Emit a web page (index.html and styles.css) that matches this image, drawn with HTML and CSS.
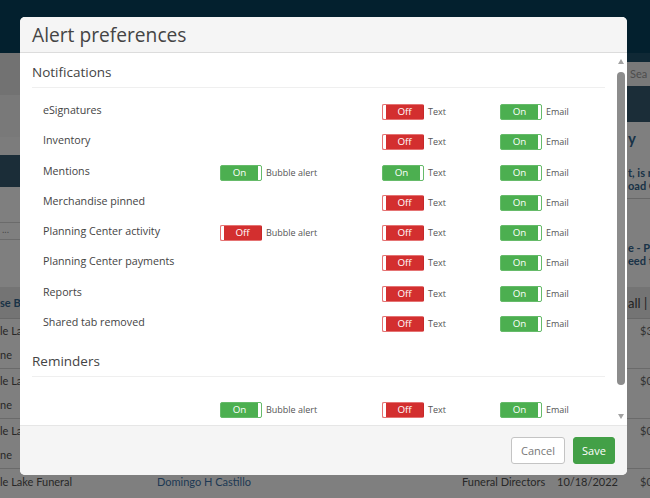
FILE: index.html
```html
<!DOCTYPE html>
<html lang="en">
<head>
<meta charset="utf-8">
<title>Alert preferences</title>
<link rel="stylesheet" href="styles.css">
</head>
<body>
<div class="page">
  <div class="topbar"></div>
  <div class="upper">
    <div class="main-top">
      <div class="bar1"></div>
      <div class="bar2"></div>
      <div class="bar3"></div>
      <div class="bar4"></div>
      <div class="filter"></div>
      <div class="filter2">...</div>
    </div>
    <div class="side">
      <div class="s-nav"></div>
      <div class="s-search">Sea</div>
      <div class="s-nav2"></div>
      <div class="s-notice">
        <div class="s-title">y</div>
        <div class="s-text s-first">t, is re</div>
        <div class="s-text">oad C</div>
        <div class="s-sep"></div>
        <div class="s-text s-second">e - Pr</div>
        <div class="s-text">eed t</div>
      </div>
    </div>
  </div>
  <div class="thead"><span class="th-name">se Br</span><span class="th-all">all |</span></div>
  <div class="trow">
    <div class="td"><div>le La</div><div>ne</div></div>
    <div class="td"></div>
    <div class="td"></div>
    <div class="td"></div>
    <div class="td amt">$3</div>
  </div>
  <div class="trow">
    <div class="td"><div>le La</div><div>ne</div></div>
    <div class="td"></div>
    <div class="td"></div>
    <div class="td"></div>
    <div class="td amt">$0</div>
  </div>
  <div class="trow">
    <div class="td"><div>le La</div><div>ne</div></div>
    <div class="td"></div>
    <div class="td"></div>
    <div class="td"></div>
    <div class="td amt">$0</div>
  </div>
  <div class="trow last-row">
    <div class="td"><div>le Lake Funeral</div></div>
    <div class="td link">Domingo H Castillo</div>
    <div class="td">Funeral Directors</div>
    <div class="td">10/18/2022</div>
    <div class="td amt">$0</div>
  </div>
</div>

<div class="overlay"></div>

<div class="modal">
  <div class="modal-header"><h1 class="modal-title">Alert preferences</h1></div>
  <div class="modal-body">
    <div class="body-content">
      <h2 class="section-title">Notifications</h2>
      <div class="rows">
        <div class="row">
          <div class="label">eSignatures</div>
          <div class="cell"></div>
          <div class="cell"><span class="toggle off"><span class="knob"></span><span class="tl">Off</span></span><span class="opt">Text</span></div>
          <div class="cell"><span class="toggle on"><span class="tl">On</span><span class="knob"></span></span><span class="opt">Email</span></div>
        </div>
        <div class="row">
          <div class="label">Inventory</div>
          <div class="cell"></div>
          <div class="cell"><span class="toggle off"><span class="knob"></span><span class="tl">Off</span></span><span class="opt">Text</span></div>
          <div class="cell"><span class="toggle on"><span class="tl">On</span><span class="knob"></span></span><span class="opt">Email</span></div>
        </div>
        <div class="row">
          <div class="label">Mentions</div>
          <div class="cell"><span class="toggle on"><span class="tl">On</span><span class="knob"></span></span><span class="opt">Bubble alert</span></div>
          <div class="cell"><span class="toggle on"><span class="tl">On</span><span class="knob"></span></span><span class="opt">Text</span></div>
          <div class="cell"><span class="toggle on"><span class="tl">On</span><span class="knob"></span></span><span class="opt">Email</span></div>
        </div>
        <div class="row">
          <div class="label">Merchandise pinned</div>
          <div class="cell"></div>
          <div class="cell"><span class="toggle off"><span class="knob"></span><span class="tl">Off</span></span><span class="opt">Text</span></div>
          <div class="cell"><span class="toggle on"><span class="tl">On</span><span class="knob"></span></span><span class="opt">Email</span></div>
        </div>
        <div class="row">
          <div class="label">Planning Center activity</div>
          <div class="cell"><span class="toggle off"><span class="knob"></span><span class="tl">Off</span></span><span class="opt">Bubble alert</span></div>
          <div class="cell"><span class="toggle off"><span class="knob"></span><span class="tl">Off</span></span><span class="opt">Text</span></div>
          <div class="cell"><span class="toggle on"><span class="tl">On</span><span class="knob"></span></span><span class="opt">Email</span></div>
        </div>
        <div class="row">
          <div class="label">Planning Center payments</div>
          <div class="cell"></div>
          <div class="cell"><span class="toggle off"><span class="knob"></span><span class="tl">Off</span></span><span class="opt">Text</span></div>
          <div class="cell"><span class="toggle on"><span class="tl">On</span><span class="knob"></span></span><span class="opt">Email</span></div>
        </div>
        <div class="row">
          <div class="label">Reports</div>
          <div class="cell"></div>
          <div class="cell"><span class="toggle off"><span class="knob"></span><span class="tl">Off</span></span><span class="opt">Text</span></div>
          <div class="cell"><span class="toggle on"><span class="tl">On</span><span class="knob"></span></span><span class="opt">Email</span></div>
        </div>
        <div class="row">
          <div class="label">Shared tab removed</div>
          <div class="cell"></div>
          <div class="cell"><span class="toggle off"><span class="knob"></span><span class="tl">Off</span></span><span class="opt">Text</span></div>
          <div class="cell"><span class="toggle on"><span class="tl">On</span><span class="knob"></span></span><span class="opt">Email</span></div>
        </div>
      </div>
      <h2 class="section-title reminders">Reminders</h2>
      <div class="rows reminder-rows">
        <div class="row">
          <div class="label"></div>
          <div class="cell"><span class="toggle on"><span class="tl">On</span><span class="knob"></span></span><span class="opt">Bubble alert</span></div>
          <div class="cell"><span class="toggle off"><span class="knob"></span><span class="tl">Off</span></span><span class="opt">Text</span></div>
          <div class="cell"><span class="toggle on"><span class="tl">On</span><span class="knob"></span></span><span class="opt">Email</span></div>
        </div>
      </div>
    </div>
    <div class="scrollbar">
      <span class="arrow-up"></span>
      <span class="thumb"></span>
      <span class="track-rest"></span>
      <span class="arrow-down"></span>
    </div>
  </div>
  <div class="modal-footer">
    <button class="btn btn-cancel" type="button">Cancel</button>
    <button class="btn btn-save" type="button">Save</button>
  </div>
</div>
</body>
</html>
```

FILE: styles.css
```css
html, body {
  margin: 0;
  padding: 0;
}
body {
  width: 650px;
  height: 498px;
  overflow: hidden;
  font-family: "Open Sans", "Liberation Sans", sans-serif;
  background: #ffffff;
}

/* ---------- background page ---------- */
.page {
  width: 650px;
  font-family: Lato, "Open Sans", sans-serif;
}
.topbar {
  height: 53px;
  background: #06405d;
}
.upper {
  display: flex;
  height: 234px;
}
.main-top {
  flex: 1;
  display: flex;
  flex-direction: column;
  background: #ffffff;
}
.bar1 { height: 42px; background: #e4e4e4; }
.bar2 { height: 42px; background: #f3f3f3; }
.bar3 { height: 18px; background: #f8f8f8; }
.bar4 { height: 32px; background: #365a70; }
.filter { height: 35px; border-bottom: 1px solid #d6d6d6; }
.filter2 {
  height: 16px;
  border-bottom: 1px solid #d6d6d6;
  font-size: 10px;
  line-height: 12px;
  color: #999;
  padding-left: 2px;
}
.side {
  width: 23px;
  display: flex;
  flex-direction: column;
  overflow: hidden;
  background: #ffffff;
}
.s-nav { height: 9px; background: #1f506b; }
.s-search {
  height: 24px;
  background: #f2f2f2;
  color: #9a9a9a;
  font-size: 11px;
  line-height: 24px;
  padding-left: 3px;
  white-space: nowrap;
}
.s-nav2 { height: 36px; background: #375b70; }
.s-notice {
  display: flex;
  flex-direction: column;
  white-space: nowrap;
  color: #34668e;
  font-weight: 700;
}
.s-title {
  font-size: 15px;
  line-height: 20px;
  margin-top: 6px;
  padding-left: 1px;
}
.s-text {
  font-size: 11px;
  line-height: 13px;
  padding-left: 1px;
}
.s-first { margin-top: 18px; }
.s-sep {
  height: 0;
  border-top: 1px solid #cfcfcf;
  margin-top: 6px;
}
.s-second { margin-top: 42px; }

.thead {
  height: 31px;
  background: #e8e8e8;
  border-bottom: 1px solid #d0d0d0;
  display: flex;
  justify-content: space-between;
  align-items: center;
  font-size: 11px;
  font-weight: 700;
  color: #34668e;
  white-space: nowrap;
}
.th-all {
  width: 22px;
  overflow: hidden;
  color: #444;
  font-weight: 400;
  font-size: 13px;
}
.trow {
  height: 49px;
  border-bottom: 1px solid #d4d4d4;
  display: grid;
  grid-template-columns: 157px 305px 95px 83px 1fr;
  font-size: 11px;
  line-height: 24px;
  color: #505050;
  white-space: nowrap;
}
.last-row {
  padding-top: 1px;
}
.td { overflow: hidden; }
.link { color: #3d73a8; }
.amt { color: #666; }

.overlay {
  position: fixed;
  inset: 0;
  background: rgba(0, 0, 0, 0.5);
}

/* ---------- modal ---------- */
.modal {
  position: fixed;
  top: 17px;
  left: 20px;
  width: 607px;
  height: 458px;
  background: #ffffff;
  border-radius: 5px;
  overflow: hidden;
  display: flex;
  flex-direction: column;
  font-family: "Open Sans", "Liberation Sans", sans-serif;
}
.modal-header {
  height: 35px;
  flex: none;
  background: #f5f5f5;
  border-bottom: 1px solid #dcdcdc;
  display: flex;
  align-items: center;
  padding: 0 12px;
}
.modal-title {
  margin: 0;
  font-size: 19.2px;
  font-weight: 400;
  color: #444;
  line-height: 24px;
}
.modal-body {
  flex: 1;
  display: flex;
  overflow: hidden;
  background: #ffffff;
}
.body-content {
  flex: 1;
  padding: 9px 9px 0 12px;
  overflow: hidden;
}
.section-title {
  margin: 0;
  font-size: 13.5px;
  font-weight: 400;
  line-height: 20px;
  color: #444;
  padding-bottom: 5px;
  border-bottom: 1px solid #efefef;
}
.rows {
  padding-top: 14px;
}
.reminders {
  margin-top: 6.6px;
}
.reminder-rows {
  padding-top: 23px;
}
.row {
  height: 30.3px;
  display: grid;
  grid-template-columns: 177px 162px 118px 1fr;
  align-items: start;
  padding-left: 11px;
}
.label {
  font-size: 10.7px;
  line-height: 16px;
  color: #444;
  white-space: nowrap;
}
.cell {
  display: flex;
  align-items: center;
  gap: 4px;
  margin-top: 2px;
  height: 16px;
}
.toggle {
  box-sizing: border-box;
  width: 42px;
  height: 16px;
  border-radius: 2px;
  display: flex;
  overflow: hidden;
  color: #ffffff;
  font-size: 9.8px;
  line-height: 14px;
}
.toggle.off {
  background: #d32f2f;
  border: 1px solid #e57373;
  border-right-color: #c62828;
}
.toggle.on {
  background: #4caf50;
  border: 1px solid #66bb6a;
}
.knob {
  width: 3px;
  flex: none;
  background: #ffffff;
}
.tl {
  flex: 1;
  text-align: center;
}
.opt {
  font-size: 9px;
  color: #555;
  line-height: 14px;
  white-space: nowrap;
}

/* scrollbar */
.scrollbar {
  width: 13px;
  flex: none;
  display: flex;
  flex-direction: column;
  align-items: center;
  padding: 6px 0;
  background: #ffffff;
}
.arrow-up {
  width: 0;
  height: 0;
  border-left: 3.5px solid transparent;
  border-right: 3.5px solid transparent;
  border-bottom: 5px solid #a3a3a3;
}
.thumb {
  width: 8px;
  height: 313px;
  margin-top: 8px;
  border-radius: 4px;
  background: #8c8c8c;
}
.track-rest {
  flex: 1;
}
.arrow-down {
  width: 0;
  height: 0;
  border-left: 3.5px solid transparent;
  border-right: 3.5px solid transparent;
  border-top: 5px solid #a3a3a3;
}

/* footer */
.modal-footer {
  height: 49px;
  flex: none;
  background: #f5f5f5;
  border-top: 1px solid #e6e6e6;
  display: flex;
  justify-content: flex-end;
  align-items: center;
  gap: 8px;
  padding: 0 12px;
}
.btn {
  height: 27px;
  border-radius: 3px;
  font-family: "Open Sans", "Liberation Sans", sans-serif;
  font-size: 11px;
  padding: 0 9px;
  margin: 0;
  cursor: pointer;
}
.btn-cancel {
  width: 54px;
  background: #ffffff;
  border: 1px solid #c4c4c4;
  color: #777;
}
.btn-save {
  width: 42px;
  background: #43a047;
  border: 1px solid #43a047;
  color: #ffffff;
  padding: 0;
}
```
